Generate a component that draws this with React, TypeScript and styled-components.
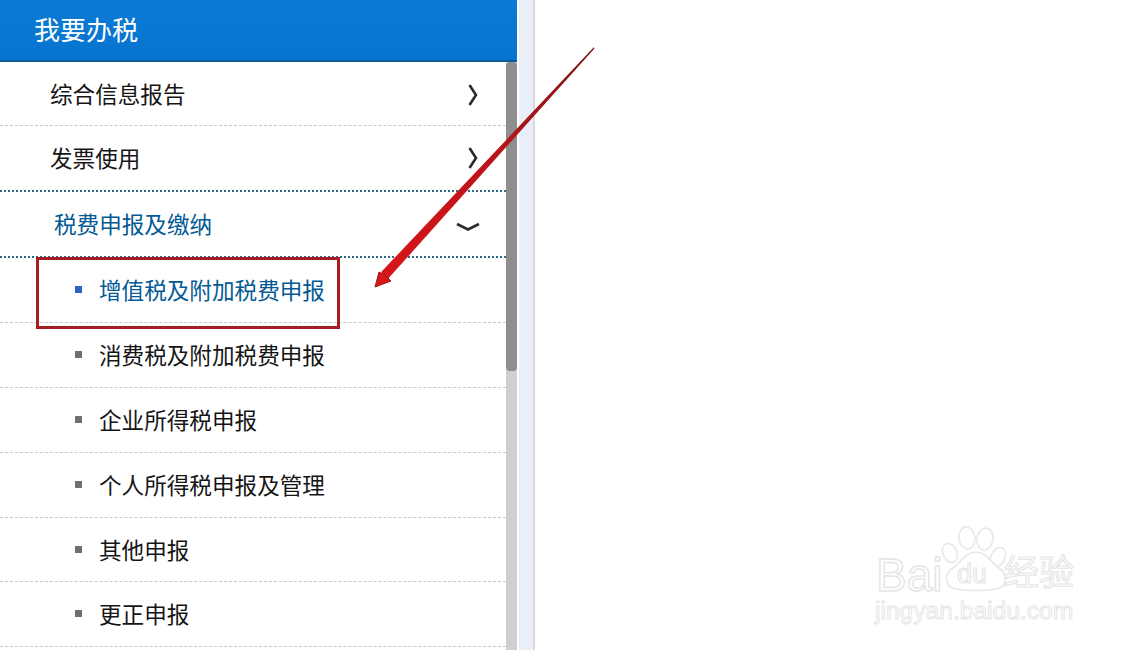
import React from "react";
import styled, { createGlobalStyle } from "styled-components";

const GlobalStyle = createGlobalStyle`
  html, body {
    margin: 0;
    padding: 0;
    background: #fff;
  }
  body {
    font-family: "Liberation Sans", "Noto Sans CJK SC", sans-serif;
  }
`;

const parents = [
  { title: "综合信息报告", height: 64 },
  { title: "发票使用", height: 66 },
];

const children = [
  { title: "增值税及附加税费申报", height: 65, active: true },
  { title: "消费税及附加税费申报", height: 65 },
  { title: "企业所得税申报", height: 65 },
  { title: "个人所得税申报及管理", height: 65 },
  { title: "其他申报", height: 64 },
  { title: "更正申报", height: 65 },
];

const App = () => {
  return (
    <Page>
      <GlobalStyle />
      <Sidebar>
        <Header>我要办税</Header>
        <Body>
          <Menu>
            {parents.map((item) => (
              <Row key={item.title} $height={item.height}>
                <RowTitle>{item.title}</RowTitle>
                <Chevron width="10" height="24" viewBox="0 0 10 24">
                  <path d="M1.5 2 L8 12 L1.5 22" />
                </Chevron>
              </Row>
            ))}
            <OpenRow>
              <OpenTitle>税费申报及缴纳</OpenTitle>
              <ChevronDown width="24" height="10" viewBox="0 0 24 10">
                <path d="M1 2 L12 7.5 L23 2" />
              </ChevronDown>
            </OpenRow>
            {children.map((item) => (
              <SubRow key={item.title} $height={item.height}>
                <Bullet $active={item.active} />
                <SubTitle $active={item.active}>{item.title}</SubTitle>
              </SubRow>
            ))}
          </Menu>
          <Track>
            <Thumb />
          </Track>
        </Body>
      </Sidebar>
      <Strip />
      <Highlight />
      <Arrow width="240" height="260" viewBox="0 0 240 260">
        <defs>
          <linearGradient id="shaft" x1="234" y1="8" x2="25" y2="235" gradientUnits="userSpaceOnUse">
            <stop offset="0" stopColor="#7d1216" />
            <stop offset="0.45" stopColor="#b81418" />
            <stop offset="1" stopColor="#d81518" />
          </linearGradient>
        </defs>
        <path d="M234 8 L28 238 L22 232 Z" fill="url(#shaft)" stroke="url(#shaft)" strokeWidth="1.2" />
        <path d="M15 247 L19 232 L25 235 L31 241 Z" fill="#d81518" stroke="#a01416" strokeWidth="1" />
      </Arrow>
      <Watermark width="210" height="110" viewBox="0 0 210 110">
        <g fill="#fff" stroke="#e8e8e8" strokeWidth="1.6">
          <ellipse cx="77" cy="31" rx="7" ry="10" transform="rotate(-25 77 31)" />
          <ellipse cx="94" cy="16" rx="8" ry="11" transform="rotate(-8 94 16)" />
          <ellipse cx="112" cy="17" rx="8" ry="11" transform="rotate(10 112 17)" />
          <ellipse cx="125" cy="35" rx="7" ry="10" transform="rotate(25 125 35)" />
          <path d="M84 67 C72 67 70 52 80 46 C88 41 92 30 103 30 C114 30 118 41 126 46 C136 52 134 67 122 67 C110 69 96 69 84 67 Z" />
        </g>
        <g fill="#fff" stroke="#e6e6e6" strokeWidth="1.5" fontFamily="'Liberation Sans', sans-serif">
          <text x="3" y="69" fontSize="46">Bai</text>
          <text x="84" y="61" fontSize="27" strokeWidth="1.2">du</text>
          <text x="2" y="97" fontSize="24.6" strokeWidth="1">jingyan.baidu.com</text>
          <text x="131" y="63" fontSize="35" strokeWidth="1.2" fontFamily="'Noto Sans CJK SC', sans-serif">经验</text>
        </g>
      </Watermark>
    </Page>
  );
};

export default App;

const Page = styled.div`
  position: relative;
  display: flex;
  width: 1140px;
  height: 650px;
  overflow: hidden;
  background: #fff;
`;

const Sidebar = styled.div`
  width: 517px;
  height: 650px;
  display: flex;
  flex-direction: column;
  flex-shrink: 0;
`;

const Header = styled.div`
  height: 62px;
  flex-shrink: 0;
  box-sizing: border-box;
  padding: 0 0 3px 34px;
  display: flex;
  align-items: center;
  background: linear-gradient(#0a7ad6, #0775cf);
  border-bottom: 2px solid #0a5c9f;
  color: #fff;
  font-size: 26px;
  font-family: "Noto Sans CJK SC", sans-serif;
`;

const Body = styled.div`
  display: flex;
  flex: 1;
  min-height: 0;
`;

const Menu = styled.div`
  flex: 1;
  min-width: 0;
  overflow: hidden;
`;

const Row = styled.div<{ $height: number }>`
  height: ${({ $height }) => $height}px;
  box-sizing: border-box;
  display: flex;
  align-items: center;
  justify-content: space-between;
  padding: 0 28px ${({ $height }) => $height - 64}px 50px;
  border-bottom: 1px dashed #c9c9c9;
  &:nth-child(2) {
    border-bottom: 2px dotted #2d6a86;
  }
`;

const RowTitle = styled.span`
  font-size: 22.6px;
  color: #151515;
  font-family: "Noto Sans CJK SC", sans-serif;
`;

const Chevron = styled.svg`
  margin-top: 2px;
  fill: none;
  stroke: #2b2b2b;
  stroke-width: 2.6;
`;

const OpenRow = styled.div`
  height: 66px;
  box-sizing: border-box;
  display: flex;
  align-items: center;
  justify-content: space-between;
  padding: 0 26px 2px 54px;
  border-bottom: 2px dotted #2d6a86;
`;

const OpenTitle = styled.span`
  font-size: 22.6px;
  color: #035a94;
  font-family: "Noto Sans CJK SC", sans-serif;
`;

const ChevronDown = styled.svg`
  margin-top: 7px;
  fill: none;
  stroke: #2b2b2b;
  stroke-width: 2.6;
`;

const SubRow = styled.div<{ $height: number }>`
  height: ${({ $height }) => $height}px;
  box-sizing: border-box;
  display: flex;
  align-items: center;
  padding: 0 0 ${({ $height }) => $height - 64}px 75px;
  border-bottom: 1px dashed #c9c9c9;
`;

const Bullet = styled.i<{ $active?: boolean }>`
  width: 7px;
  height: 7px;
  flex-shrink: 0;
  margin-right: 17px;
  background: ${({ $active }) => ($active ? "#2b62c4" : "#707070")};
`;

const SubTitle = styled.span<{ $active?: boolean }>`
  font-size: 22.6px;
  color: ${({ $active }) => ($active ? "#035a94" : "#151515")};
  font-family: "Noto Sans CJK SC", sans-serif;
`;

const Track = styled.div`
  width: 11px;
  flex-shrink: 0;
  background: #cfcfcf;
`;

const Thumb = styled.div`
  height: 309px;
  background: #8e8e8e;
  border-radius: 4px;
`;

const Strip = styled.div`
  width: 14px;
  margin-left: 2px;
  flex-shrink: 0;
  background: #e9eef8;
  border-right: 2px solid #d9d9d9;
`;

const Highlight = styled.div`
  position: absolute;
  left: 36px;
  top: 257px;
  width: 298px;
  height: 66px;
  border: 3px solid #a31f24;
`;

const Arrow = styled.svg`
  position: absolute;
  left: 360px;
  top: 40px;
`;

const Watermark = styled.svg`
  position: absolute;
  left: 873px;
  top: 522px;
`;
